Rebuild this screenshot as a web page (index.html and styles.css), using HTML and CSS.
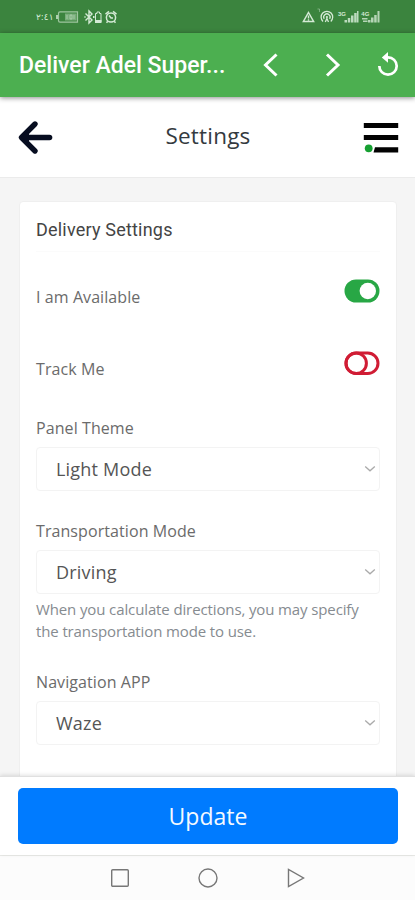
FILE: index.html
```html
<!DOCTYPE html>
<html lang="en">
<head>
<meta charset="utf-8">
<meta name="viewport" content="width=device-width, initial-scale=1">
<title>Settings</title>
<link rel="stylesheet" href="styles.css">
</head>
<body>
<div class="screen">
  <div class="status">
    <span class="time">٢:٤١</span>
    <svg class="status-left" width="62" height="16" viewBox="0 0 62 16" fill="none" stroke="#d4ead5" stroke-width="1.2">
      <path d="M4 2.800H21.500V13.200H4Q2.500 13.200 2.500 11.500V4.500Q2.500 2.800 4 2.800Z" opacity=".65"/>
      <path d="M1 6v4" stroke-width="1.500"/>
      <path d="M9 4.500H20.500V11.500H9Z" fill="#d4ead5" stroke="none" opacity=".4"/>
      <path d="M11 6v4M14 6h2v4h-2zM18 6v4" stroke-width=".8" opacity=".6"/>
      <path d="M29.500 4.500L36 11l-3 3V2l3 3-6.500 6.500" stroke-width="1.400"/>
      <path d="M28.500 8h1M37 8h1.500" stroke-width="1.800"/>
      <path d="M39.500 4.500h1.500V3h2.500v1.500H45V13h-5.500z" stroke-width="1"/>
      <path d="M39 11h6.500v3H39z" fill="#d4ead5" stroke="none"/>
      <circle cx="55" cy="8.500" r="4.600" stroke-width="1.500"/>
      <path d="M49.500 5.200L53 2.400M60.500 5.200L57 2.400M51.800 12.300l-1.300 1.500M58.200 12.300l1.300 1.500M53 6.500l2 2.500h2" stroke-width="1.500"/>
    </svg>
    <svg class="status-right" width="80" height="18" viewBox="0 0 80 18" fill="none" stroke="#d4ead5" stroke-width="1.300">
      <path d="M6.500 4.500L11.600 13.500H1.400Z" stroke-width="1.500"/>
      <path d="M6.500 7.500v3M6.500 11.300v1.500" stroke-width="1.400"/>
      <path d="M15.500 1h2v3" stroke-width=".7" opacity=".6"/>
      <path d="M21 13.400a5.800 5.800 0 1 1 7.800 0M22.200 10.800a3.200 3.200 0 1 1 5.400 0"/>
      <circle cx="24.900" cy="9" r="1.100" fill="#d4ead5" stroke="none"/>
      <path d="M23.300 14l1.600-3.500 1.600 3.500"/>
      <g fill="#d4ead5" stroke="none">
        <text class="net" x="36" y="7.500">3G</text>
        <path d="M42.500 12h2.500v2.500h-2.500zM45.800 10h2.500v4.500h-2.500zM49 7.500h2.500v7H49zM52.200 5h2.500v9.500h-2.500zM55 3h1.500v11.500H55z" opacity=".85"/>
        <text class="net" x="59.300" y="7.500">4G</text>
        <path d="M60 10h5.500v1.500H60zM61 12.500h4.500V14H61zM66 12h2.500v2.500H66zM69 9.500h2.500v5H69zM72.200 7h2.500v7.500h-2.500zM75.500 3h2v11.500h-2z" opacity=".8"/>
      </g>
    </svg>
  </div>

  <div class="appbar">
    <span class="app-title">Deliver Adel Super...</span>
    <svg width="150" height="34" viewBox="0 0 150 34" fill="none" stroke="#fff" stroke-width="3">
      <path d="M25.500 6.500L14.500 17l11 10.500M76 6.500L87 17 76 27.500"/>
      <path d="M128.300 18a8.700 8.700 0 1 0 8.700-8.700h-1.500" stroke-width="2.700"/>
      <path d="M137 4v10.800l-6.200-5.400z" fill="#fff" stroke="none"/>
    </svg>
  </div>

  <header class="header">
    <svg width="36" height="36" viewBox="0 0 36 36" fill="none" stroke="#070d20" stroke-linecap="round">
      <path d="M32.500 18.500H6" stroke-width="5.600"/>
      <path d="M18 5L4.500 18.500 18 32" stroke-width="5.400" stroke-linejoin="round"/>
      <path d="M4 18L12 11v14.500z" fill="#070d20" stroke="none"/>
    </svg>
    <h1>Settings</h1>
    <svg width="36" height="36" viewBox="0 0 36 36">
      <path d="M.8 4h34.400v5H.8zM.8 16h34.400v5H.8zM12 28.300h23.200v5.300H10.500z" fill="#020202"/>
      <circle cx="5.700" cy="29.300" r="3.900" fill="#16a032"/>
    </svg>
  </header>

  <main class="content">
    <section class="card">
      <h2>Delivery Settings</h2>
      <div class="row available">
        <span class="label">I am Available</span>
        <svg width="36" height="24" viewBox="0 0 36 24"><rect x=".5" y=".5" width="35" height="23" rx="11.500" fill="#28a745"/><circle cx="23.800" cy="12" r="8.200" fill="#fff"/></svg>
      </div>
      <div class="row track">
        <span class="label">Track Me</span>
        <svg width="36" height="24" viewBox="0 0 36 24" fill="none" stroke="#d01c34" stroke-width="3"><rect x="2" y="2" width="32" height="20.500" rx="10.250"/><circle cx="12.200" cy="12.250" r="10.200"/></svg>
      </div>
      <div class="field">
        <span class="label">Panel Theme</span>
        <div class="select"><span>Light Mode</span><svg width="12" height="8" viewBox="0 0 12 8"><path d="M1.200 1.500L6 5.800l4.800-4.300"/></svg></div>
      </div>
      <div class="field">
        <span class="label">Transportation Mode</span>
        <div class="select"><span>Driving</span><svg width="12" height="8" viewBox="0 0 12 8"><path d="M1.200 1.500L6 5.800l4.800-4.300"/></svg></div>
        <p class="help">When you calculate directions, you may specify<br>the transportation mode to use.</p>
      </div>
      <div class="field">
        <span class="label">Navigation APP</span>
        <div class="select"><span>Waze</span><svg width="12" height="8" viewBox="0 0 12 8"><path d="M1.200 1.500L6 5.800l4.800-4.300"/></svg></div>
      </div>
    </section>
  </main>

  <footer class="actions"><button type="button">Update</button></footer>

  <nav class="system-nav">
    <svg width="20" height="20" viewBox="0 0 20 20"><rect x="1.700" y="1.700" width="16.600" height="16.600" rx="1"/></svg>
    <svg width="20" height="20" viewBox="0 0 20 20"><circle cx="10" cy="10" r="9"/></svg>
    <svg width="20" height="20" viewBox="0 0 20 20"><path d="M2.500 1.500v17L17.500 10z"/></svg>
  </nav>
</div>
</body>
</html>
```
FILE: styles.css
```css
* { box-sizing: border-box; }

body {
  margin: 0;
  font-family: "Open Sans", "Noto Sans", sans-serif;
  background: #fff;
}

svg { display: block; flex: none; }

.screen {
  display: flex;
  flex-direction: column;
  width: 415px;
  height: 900px;
  overflow: hidden;
}

.status {
  flex: 0 0 33px;
  display: flex;
  align-items: center;
  background: #3b843e;
  padding: 0 33px 0 36px;
}
.time {
  width: 20px;
  font: 9px/16px "DejaVu Sans", sans-serif;
  letter-spacing: -.3px;
  color: #d4ead5;
  white-space: nowrap;
}
.status-right { margin-left: auto; }
.net { font: bold 6px "Liberation Sans", sans-serif; }

.appbar {
  flex: 0 0 64px;
  display: flex;
  align-items: center;
  justify-content: space-between;
  padding: 2px 16px 0 19px;
  background: #4caf50;
  box-shadow: 0 1px 5px rgba(0, 0, 0, .45);
  z-index: 1;
}
.appbar svg { margin: -2px -2px 0 0; }
.app-title {
  font: 500 23px/28px Roboto, sans-serif;
  color: #fff;
  white-space: nowrap;
}

.header {
  flex: 0 0 81px;
  display: flex;
  align-items: center;
  justify-content: space-between;
  padding: 0 16px 0 17px;
  border-bottom: 1px solid #ebebeb;
  background: #fff;
}
h1 {
  margin: -2px 0 0;
  font-size: 22.5px;
  line-height: 30px;
  letter-spacing: .2px;
  font-weight: 400;
  color: #343a40;
}

.content {
  flex: 1;
  min-height: 0;
  padding: 23px 18px 0 19px;
  background: #f5f5f5;
  overflow: hidden;
}
.card {
  height: 620px;
  padding: 16px 16px 0;
  border: 1px solid #efefef;
  border-radius: 4px;
  background: #fff;
}
h2 {
  margin: 0;
  height: 34px;
  border-bottom: 1px solid #fbfbfb;
  font: 400 18px/24px Roboto, sans-serif;
  letter-spacing: .2px;
  color: #444;
}
.row {
  display: flex;
  justify-content: space-between;
}
.label {
  display: block;
  font-size: 16px;
  line-height: 22px;
  letter-spacing: .08px;
  color: #6b6b6b;
  white-space: nowrap;
}
.available { padding-top: 27px; height: 99px; }
.available .label { padding-top: 7px; }
.track { height: 66px; }
.track .label { padding-top: 7px; }
.field { margin-bottom: 28px; }
.select {
  display: flex;
  align-items: center;
  justify-content: space-between;
  height: 44px;
  margin-top: 8px;
  padding: 0 3px 0 19px;
  border: 1px solid #f3f3f3;
  border-radius: 4px;
  font-size: 18px;
  line-height: 24px;
  letter-spacing: .2px;
  color: #555;
}
.field + .field .label { padding-top: 1px; }
.select path { fill: none; stroke: #aaa; stroke-width: 1.3; }
.help {
  margin: 4px 0 0;
  font-size: 15px;
  line-height: 22px;
  letter-spacing: -.12px;
  color: #868b90;
  white-space: nowrap;
}

.actions {
  flex: 0 0 79px;
  padding: 11px 17px 0 18px;
  border-top: 1px solid #e0e0e0;
  box-shadow: 0 -1px 4px rgba(0, 0, 0, .12);
  background: #fff;
  z-index: 1;
}
button {
  display: block;
  width: 100%;
  height: 56px;
  padding: 0;
  border: 0;
  border-radius: 5px;
  background: #007bff;
  color: #f4f9ff;
  font: 400 23px/30px "Open Sans", sans-serif;
}

.system-nav {
  flex: 0 0 45px;
  display: flex;
  justify-content: center;
  align-items: center;
  gap: 68px;
  border-top: 1px solid #eaebe8;
  background: #fcfcfc;
}
.system-nav svg { fill: none; stroke: #777; stroke-width: 1.4; }
```
